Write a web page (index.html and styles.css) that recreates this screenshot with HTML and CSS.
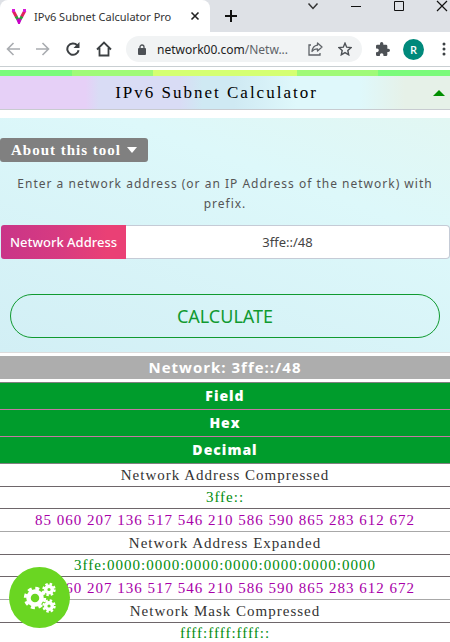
FILE: index.html
```html
<!DOCTYPE html>
<html lang="en">
<head>
    <meta charset="UTF-8">
    <meta name="viewport" content="width=device-width, initial-scale=1.0">
    <title>IPv6 Subnet Calculator Pro</title>
    <link rel="stylesheet" href="styles.css">
</head>
<body>

    <!-- Browser window -->
    <header class="browser">
        <div class="tab-bar">
            <div class="tab">
                <svg class="favicon" width="16" height="16" viewBox="0 0 16 16" fill="none" stroke-width="3">
                    <path d="M2 2.500L5.500 9M14 2.500L10.500 9" stroke="#e0245e"/>
                    <path d="M5 8.500L8 13M11 8.500L8 13" stroke="#2e9e3a"/>
                    <path d="M6.800 11L8 14L9.200 11" stroke="#c800c8"/>
                    <path d="M1 1h3v3H1zM12 1h3v3h-3z" fill="#d81bd8"/>
                </svg>
                <span class="tab-title">IPv6 Subnet Calculator Pro</span>
                <button class="icon-button tab-close" aria-label="Close tab">
                    <svg width="10" height="10" viewBox="0 0 10 10" stroke="#222" stroke-width="1.600"><path d="M1.500 1.500l7 7M8.500 1.500l-7 7"/></svg>
                </button>
            </div>
            <button class="icon-button new-tab" aria-label="New tab">
                <svg width="14" height="14" viewBox="0 0 14 14" stroke="#111" stroke-width="2"><path d="M7 1v12M1 7h12"/></svg>
            </button>
            <div class="window-controls">
                <button class="icon-button" aria-label="Search tabs">
                    <svg width="12" height="12" viewBox="0 0 12 12" fill="none" stroke="#333" stroke-width="1.500"><path d="M1.500 3.500L6 8.500l4.500-5"/></svg>
                </button>
                <button class="icon-button" aria-label="Minimize">
                    <svg width="12" height="12" viewBox="0 0 12 12" stroke="#111"><path d="M1 6.500h10"/></svg>
                </button>
                <button class="icon-button" aria-label="Maximize">
                    <svg width="12" height="12" viewBox="0 0 12 12" fill="none" stroke="#111"><path d="M1.500 1.500h9v9h-9z"/></svg>
                </button>
                <button class="icon-button" aria-label="Close">
                    <svg width="12" height="12" viewBox="0 0 12 12" stroke="#111" stroke-width="1.200"><path d="M1 1l10 10M11 1L1 11"/></svg>
                </button>
            </div>
        </div>

        <div class="toolbar">
            <div class="nav-buttons">
                <button class="icon-button" aria-label="Back">
                    <svg width="14" height="14" viewBox="0 0 14 14" fill="none" stroke="#a9acb0" stroke-width="1.600"><path d="M14 7H1.500M7.500 1L1.500 7l6 6"/></svg>
                </button>
                <button class="icon-button" aria-label="Forward">
                    <svg width="14" height="14" viewBox="0 0 14 14" fill="none" stroke="#a9acb0" stroke-width="1.600"><path d="M0 7h12.500M6.500 1l6 6-6 6"/></svg>
                </button>
                <button class="icon-button" aria-label="Reload">
                    <svg width="14" height="14" viewBox="0 0 14 14"><path d="M12.600 8.300A5.700 5.700 0 1 1 11.200 3.200" fill="none" stroke="#3c4043" stroke-width="2"/><path d="M13.500 0v6h-6z" fill="#3c4043"/></svg>
                </button>
                <button class="icon-button" aria-label="Home">
                    <svg width="16" height="16" viewBox="0 0 16 16" fill="none" stroke="#3c4043" stroke-width="1.800"><path d="M1 8.500L8 1.500l7 7M3.500 7v7.500h9V7"/></svg>
                </button>
            </div>
            <div class="address-bar">
                <svg width="8" height="11" viewBox="0 0 8 11"><path d="M2 5V3a2 2 0 0 1 4 0v2" fill="none" stroke="#4d5156" stroke-width="1.300"/><rect y="4" width="8" height="7" rx="1" fill="#4d5156"/></svg>
                <span class="url">network00.com<span class="url-path">/Netw...</span></span>
                <button class="icon-button" aria-label="Share">
                    <svg width="15" height="14" viewBox="0 0 15 14" fill="none" stroke="#5f6368" stroke-width="1.300"><path d="M3 3H1v10h11v-2"/><path d="M9.500 1l4.500 4-4.500 4V6.800C7 6.800 5.300 7.600 4 9.500 4.400 6 6.200 3.700 9.500 3.200z" stroke-linejoin="round"/></svg>
                </button>
                <button class="icon-button" aria-label="Bookmark">
                    <svg width="14" height="14" viewBox="0 0 14 14" fill="none" stroke="#4d5156" stroke-width="1.400"><path d="M7 1.200l1.700 4 4.300.4-3.200 2.900.9 4.300L7 10.600l-3.700 2.200.9-4.300L1 5.600l4.300-.4z"/></svg>
                </button>
            </div>
            <div class="toolbar-actions">
                <button class="icon-button" aria-label="Extensions">
                    <svg width="14" height="14" viewBox="2 1 21 21" fill="#4d5156"><path d="M20.500 11H19V7a2 2 0 0 0-2-2h-4V3.500a2.500 2.500 0 0 0-5 0V5H4a2 2 0 0 0-2 2v3.800h1.500a2.700 2.700 0 0 1 0 5.400H2V20a2 2 0 0 0 2 2h3.800v-1.500a2.700 2.700 0 0 1 5.400 0V22H17a2 2 0 0 0 2-2v-4h1.500a2.500 2.500 0 0 0 0-5z"/></svg>
                </button>
                <button class="icon-button avatar" aria-label="Profile">R</button>
                <button class="icon-button menu" aria-label="Menu">
                    <svg width="4" height="14" viewBox="0 0 4 14" fill="#3c4043"><circle cx="2" cy="2" r="1.500"/><circle cx="2" cy="7" r="1.500"/><circle cx="2" cy="12" r="1.500"/></svg>
                </button>
            </div>
        </div>
    </header>

    <main>
        <div class="color-strip"></div>
        <div class="title-bar">
            <h1>IPv6 Subnet Calculator</h1>
            <button class="icon-button collapse" aria-label="Collapse">
                <svg width="12" height="6" viewBox="0 0 12 6" fill="#008f00"><path d="M6 0l6 6H0z"/></svg>
            </button>
        </div>

        <form class="calculator" onsubmit="return false">
            <button type="button" class="about-button">About this tool
                <svg width="10" height="6" viewBox="0 0 10 6" fill="#fff"><path d="M0 0h10L5 6z"/></svg>
            </button>
            <p class="hint">Enter a network address (or an IP Address of the network) with prefix.</p>
            <div class="input-group">
                <label for="address">Network Address</label>
                <input type="text" id="address" value="3ffe::/48">
            </div>
            <button type="submit" class="calculate">CALCULATE</button>
        </form>

        <h2 class="network">Network: 3ffe::/48</h2>

        <table class="results">
            <thead>
                <tr><th>Field</th><th>Hex</th><th>Decimal</th></tr>
            </thead>
            <tbody>
                <tr>
                    <td>Network Address Compressed</td>
                    <td class="hex">3ffe::</td>
                    <td class="decimal">85 060 207 136 517 546 210 586 590 865 283 612 672</td>
                </tr>
                <tr>
                    <td>Network Address Expanded</td>
                    <td class="hex">3ffe:0000:0000:0000:0000:0000:0000:0000</td>
                    <td class="decimal">85 060 207 136 517 546 210 586 590 865 283 612 672</td>
                </tr>
                <tr>
                    <td>Network Mask Compressed</td>
                    <td class="hex">ffff:ffff:ffff::</td>
                </tr>
            </tbody>
        </table>
    </main>

    <!-- Floating settings button -->
    <button class="settings" aria-label="Settings">
        <svg width="34" height="32" viewBox="0 0 34 32" fill="none" stroke="#fff">
            <circle cx="12" cy="16" r="6.500" stroke-width="4.500"/>
            <circle cx="12" cy="16" r="9.700" stroke-width="3" stroke-dasharray="4 3.618"/>
            <circle cx="26" cy="7.500" r="3.300" stroke-width="3.400"/>
            <circle cx="26" cy="7.500" r="5.500" stroke-width="2.400" stroke-dasharray="2.400 1.920"/>
            <circle cx="26" cy="24" r="3.300" stroke-width="3.400"/>
            <circle cx="26" cy="24" r="5.500" stroke-width="2.400" stroke-dasharray="2.400 1.920"/>
        </svg>
    </button>

</body>
</html>
```
FILE: styles.css
```css
* {
    box-sizing: border-box;
}

html {
    scrollbar-width: none;
}

body {
    font-family: "Open Sans", sans-serif;
    background: #fff;
    color: #444;
    margin: 0;
}

h1, h2, p {
    margin: 0;
}

button {
    font-family: inherit;
    cursor: pointer;
}

.icon-button {
    display: flex;
    align-items: center;
    justify-content: center;
    padding: 0;
    border: none;
    background: none;
}

/* Browser window */
.browser {
    border-bottom: 1px solid #c9cfd2;
    margin-bottom: 3px;
}

.tab-bar {
    display: flex;
    align-items: center;
    height: 32px;
    background: #dee1e6;
}

.tab {
    display: flex;
    align-items: center;
    width: 210px;
    height: 32px;
    padding: 0 10px 0 11px;
    background: #fff;
    border-radius: 8px 8px 0 0;
}

.tab-title {
    flex: 1;
    margin-left: 7px;
    font-family: "Noto Sans", sans-serif;
    font-size: 11px;
    color: #333;
    white-space: nowrap;
}

.new-tab {
    margin-left: 14px;
}

.window-controls {
    display: flex;
    align-self: flex-start;
    gap: 31px;
    margin-left: auto;
    padding-right: 2px;
}

.toolbar {
    display: flex;
    align-items: center;
    height: 34px;
    padding: 0 4px 0 6px;
}

.nav-buttons {
    display: flex;
    align-items: center;
    gap: 16px;
}

.address-bar {
    display: flex;
    flex: 1;
    align-items: center;
    gap: 15px;
    height: 26px;
    margin-left: 14px;
    padding: 0 10px 0 12px;
    background: #f1f3f4;
    border-radius: 13px;
}

.url {
    flex: 1;
    font-family: "Noto Sans", sans-serif;
    font-size: 12px;
    color: #222;
    white-space: nowrap;
    margin-left: -4px;
}

.url-path {
    color: #5f6368;
}

.toolbar-actions {
    display: flex;
    align-items: center;
    gap: 13px;
    margin-left: 14px;
}

.avatar {
    width: 21px;
    height: 21px;
    border-radius: 50%;
    background: #00897b;
    color: #fff;
    font-size: 11px;
    font-weight: 600;
}

.menu {
    margin-left: 5px;
}

/* Page header */
.color-strip {
    height: 6px;
    background: linear-gradient(to right, #7bfb7b 0 16%, #a0fa78 16% 34%, #d5ff72 34% 66%, #a0fa78 66% 84%, #7bfb7b 84%);
}

.title-bar {
    display: flex;
    align-items: center;
    height: 34px;
    padding-right: 5px;
    background: linear-gradient(to right, #e6d0f7 0 19%, #d9dcf5 22% 40%, #cfe9f3 45% 52%, #dff8fb 66% 80%, #e6f1e8 90%);
    border-bottom: 1px solid #c8cbd0;
}

.title-bar h1 {
    flex: 1;
    font-family: "Liberation Serif", serif;
    font-size: 17px;
    font-weight: normal;
    letter-spacing: 2px;
    text-align: center;
    color: #000;
}

/* Calculator form */
.calculator {
    margin-top: 8px;
    padding-top: 20px;
    padding-bottom: 14px;
    background: linear-gradient(20deg, #d2eff5, #ddf8fa 70%, #e2f7f3);
    border-bottom: 1px solid #dcdcdc;
}

.about-button {
    display: flex;
    align-items: center;
    gap: 6px;
    height: 24px;
    padding: 0 11px;
    border: none;
    border-radius: 3px;
    background: #808080;
    color: #fff;
    font-family: "Liberation Serif", serif;
    font-size: 15px;
    font-weight: bold;
    letter-spacing: 1px;
}

.hint {
    margin-top: 12px;
    padding: 0 8px;
    font-family: "Noto Sans", sans-serif;
    font-size: 12px;
    line-height: 20px;
    letter-spacing: 1px;
    text-align: center;
    color: #555;
}

.input-group {
    display: flex;
    height: 34px;
    margin-top: 11px;
    padding-left: 1px;
}

.input-group label {
    display: flex;
    align-items: center;
    padding: 0 9px;
    border-radius: 3px 0 0 3px;
    background: linear-gradient(to right, #c93588, #d83b80 50%, #ea4075 85%);
    color: #fff;
    font-family: "Noto Sans", sans-serif;
    font-size: 13px;
    font-weight: 500;
}

.input-group input {
    flex: 1;
    min-width: 0;
    padding: 0;
    border: 1px solid #c5cbd6;
    border-left: none;
    border-radius: 0 4px 4px 0;
    background: #fff;
    font-family: "Noto Sans", sans-serif;
    font-size: 13px;
    text-align: center;
    color: #444;
}

.calculate {
    display: block;
    width: calc(100% - 20px);
    height: 44px;
    margin: 35px 10px 0;
    border: 1px solid #109a30;
    border-radius: 22px;
    background: none;
    color: #109a30;
    font-family: "Noto Sans", sans-serif;
    font-size: 18px;
}

/* Results */
.network {
    height: 23px;
    margin: 3px 0;
    background: #adadad;
    color: #fff;
    font-size: 15px;
    line-height: 23px;
    letter-spacing: 1px;
    text-align: center;
}

.results,
.results thead,
.results tbody,
.results tr,
.results th,
.results td {
    display: block;
}

.results {
    border-top: 1px solid #808080;
    text-align: center;
    letter-spacing: 1px;
}

.results th {
    height: 27px;
    background: #009c2c;
    border-bottom: 1px solid #c678a4;
    color: #fff;
    font-size: 14px;
    font-weight: 800;
    line-height: 26px;
    padding: 0;
}

.results th:last-child {
    border-bottom-color: #808080;
}

.results td {
    padding: 0;
    border-bottom: 1px solid #6e666a;
    color: #333;
    font-family: "Liberation Serif", serif;
    font-size: 15px;
    line-height: 22px;
}

.results .hex {
    color: #008c0c;
    line-height: 21px;
}

.results .decimal {
    border-bottom-color: #a8a8a8;
    color: #a800a8;
}

/* Floating button */
.settings {
    position: fixed;
    left: 9px;
    bottom: 14px;
    display: flex;
    align-items: center;
    justify-content: center;
    width: 61px;
    height: 61px;
    padding: 0;
    border: none;
    border-radius: 50%;
    background: #6ad622;
}
```
